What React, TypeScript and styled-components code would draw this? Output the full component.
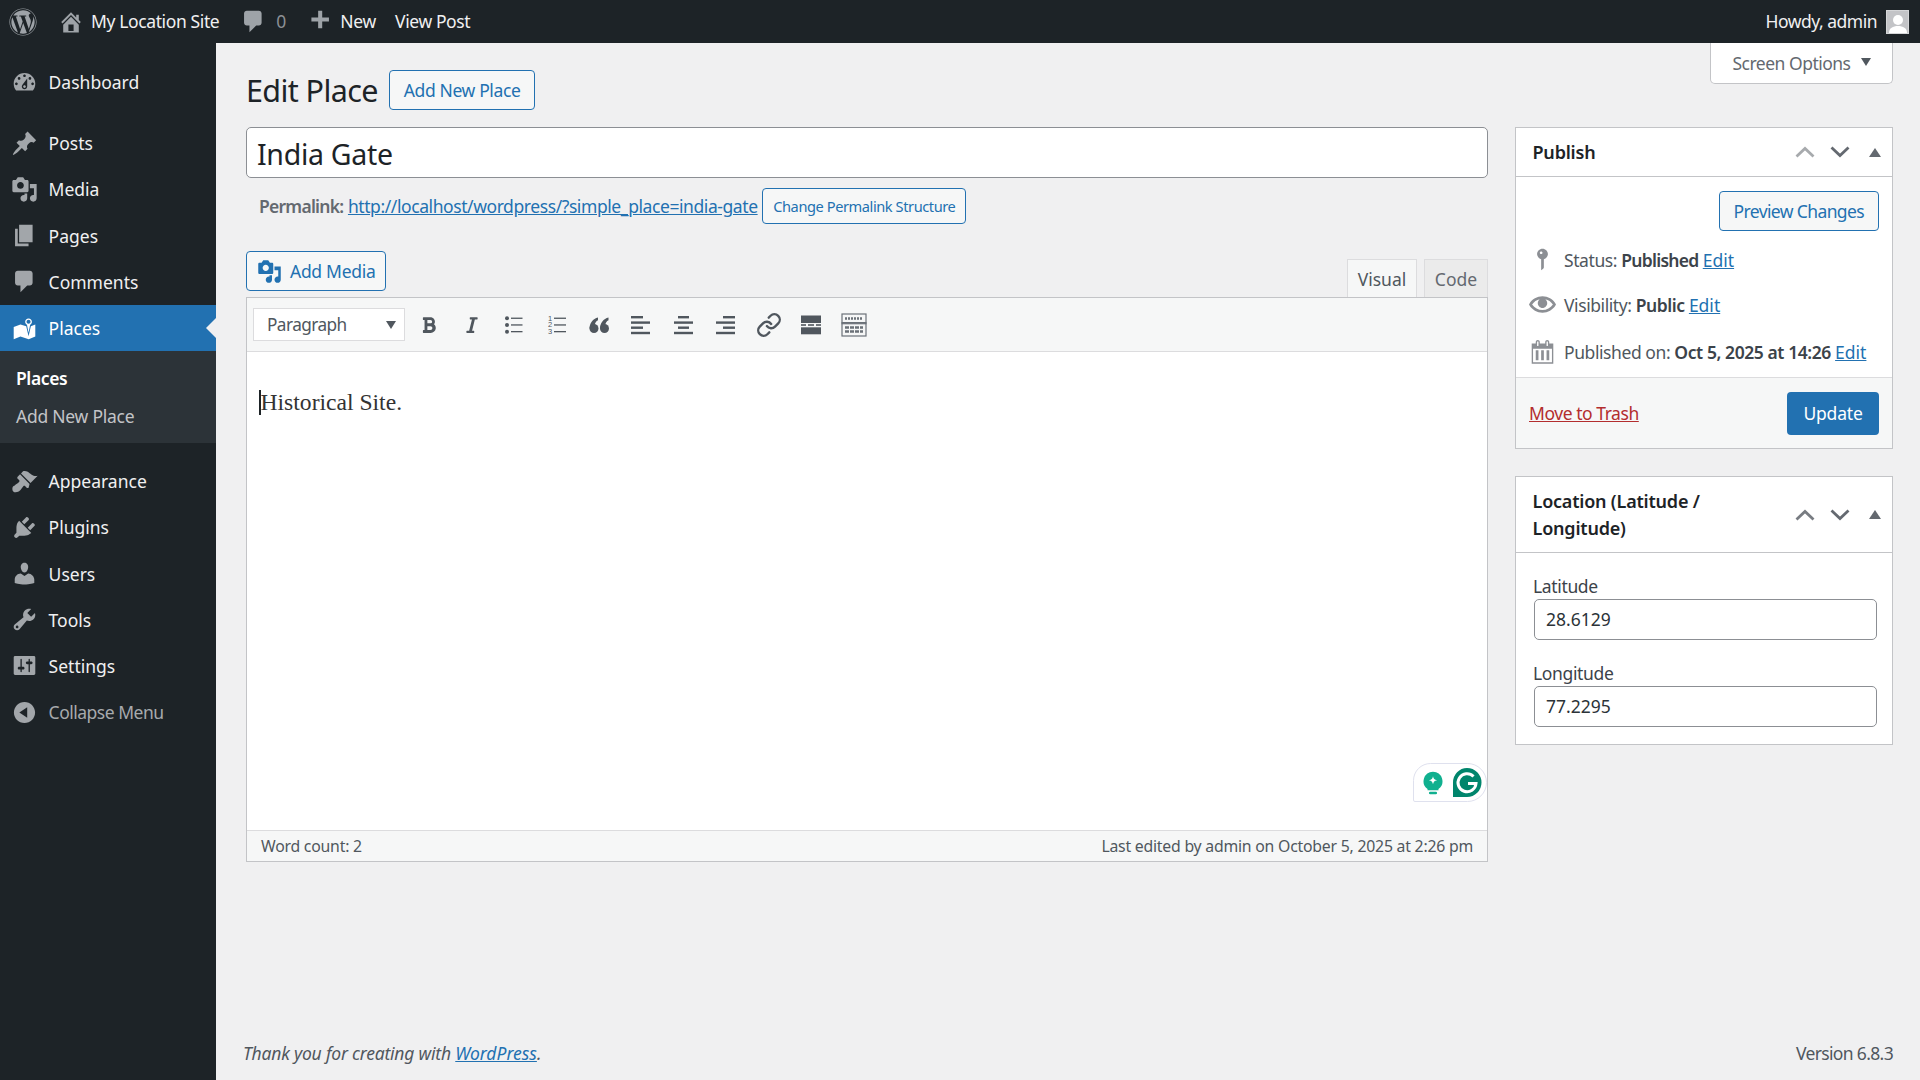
import React from 'react';
import styled, { createGlobalStyle } from 'styled-components';
import { FaWordpress, FaBold, FaItalic } from 'react-icons/fa';
import { Link as ChainIcon } from 'lucide-react';

const font = `"Noto Sans", "Open Sans", sans-serif`;

const Global = createGlobalStyle`
  html, body { margin: 0; padding: 0; height: 100%; background: #f0f0f1; }
  body { font-family: ${font}; font-size: 17.5px; color: #3c434a; overflow: hidden; }
  * { box-sizing: border-box; }
`;

const D: Record<string, string> = {
  dashboard: 'M3.76 16h12.48c1.1-1.37 1.76-3.11 1.76-5 0-4.42-3.58-8-8-8s-8 3.58-8 8c0 1.89.66 3.63 1.76 5zM10 4c.55 0 1 .45 1 1s-.45 1-1 1-1-.45-1-1 .45-1 1-1zM6 6c.55 0 1 .45 1 1s-.45 1-1 1-1-.45-1-1 .45-1 1-1zm8 0c.55 0 1 .45 1 1s-.45 1-1 1-1-.45-1-1 .45-1 1-1zm-5.37 5.55L12 7v6c0 1.1-.9 2-2 2s-2-.9-2-2c0-.57.24-1.08.63-1.45zM4 10c.55 0 1 .45 1 1s-.45 1-1 1-1-.45-1-1 .45-1 1-1zm12 0c.55 0 1 .45 1 1s-.45 1-1 1-1-.45-1-1 .45-1 1-1zm-5 3c0-.55-.45-1-1-1s-1 .45-1 1 .45 1 1 1 1-.45 1-1z',
  post: 'M10.44 3.02l1.82-1.82 6.36 6.35-1.83 1.82c-1.05-.68-2.48-.57-3.41.36l-.75.75c-.92.93-1.04 2.35-.35 3.41l-1.83 1.82-2.41-2.41-2.8 2.79c-.42.42-3.38 2.71-3.8 2.29s1.86-3.39 2.28-3.81l2.79-2.79L4.1 9.36l1.83-1.82c1.05.69 2.48.57 3.4-.36l.75-.75c.93-.92 1.05-2.35.36-3.41z',
  media: 'M13 11V4c0-.55-.45-1-1-1h-1.67L9 1H5L3.67 3H2c-.55 0-1 .45-1 1v7c0 .55.45 1 1 1h10c.55 0 1-.45 1-1zM7 4.5c1.38 0 2.5 1.12 2.5 2.5S8.38 9.5 7 9.5 4.5 8.38 4.5 7 5.62 4.5 7 4.5zM14 6h5v10.5c0 1.38-1.12 2.5-2.5 2.5S14 17.88 14 16.5s1.12-2.5 2.5-2.5c.17 0 .34.02.5.05V9h-3V6zm-4 8.05V13h2v3.5c0 1.38-1.12 2.5-2.5 2.5S7 17.88 7 16.5 8.12 14 9.5 14c.17 0 .34.02.5.05z',
  page: 'M6 15V2h10v13H6zm-1 1h8v2H3V5h2v11z',
  comment: 'M5 2h9c1.1 0 2 .9 2 2v7c0 1.1-.9 2-2 2h-2l-5 5v-5H5c-1.1 0-2-.9-2-2V4c0-1.1.9-2 2-2z',
  places: 'M13 13.14l1.17-5.94c.79-.43 1.33-1.25 1.33-2.2 0-1.38-1.12-2.5-2.5-2.5S10.5 3.62 10.5 5c0 .95.54 1.77 1.33 2.2zm0-9.64c.83 0 1.5.67 1.5 1.5s-.67 1.5-1.5 1.5-1.5-.67-1.5-1.5.67-1.5 1.5-1.5zm1.72 4.8L18 6.97v9L13.12 18 7 15.97l-5 2v-9l5-2 4.27 1.41 1.73 7.3z',
  appearance: 'M14.48 11.06L7.41 3.99l1.5-1.5c.5-.56 2.3-.47 3.51.32 1.21.8 1.43 1.28 2.91 2.1 1.18.64 2.45 1.26 4.45.85zm-.71.71L6.7 4.7 4.93 6.47c-.39.39-.39 1.02 0 1.41l1.06 1.06c.39.39.39 1.03 0 1.42-.6.6-1.43 1.11-2.21 1.69-.35.26-.7.53-1.01.84C1.43 13.23 1 14.12 1 15.5 1 17 2 18 3.5 18c1.38 0 2.27-.43 3.11-1.27.31-.31.58-.66.84-1.01.58-.78 1.09-1.61 1.69-2.21.39-.39 1.03-.39 1.42 0l1.06 1.06c.39.39 1.02.39 1.41 0z',
  plugins: 'M13.11 4.36L9.87 7.6 8 5.73l3.24-3.24c.35-.34 1.05-.2 1.56.32.52.51.66 1.21.31 1.55zm-8 1.77l.91-1.12 9.01 9.01-1.19.84c-.71.71-2.63 1.16-3.82 1.16H6.14L4.9 17.26c-.59.59-1.54.59-2.12 0-.59-.58-.59-1.53 0-2.12l1.24-1.24v-3.88c0-1.13.4-3.19 1.09-3.89zm7.26 3.97l3.24-3.24c.34-.35 1.04-.21 1.55.31.52.51.66 1.21.31 1.55l-3.24 3.25z',
  users: 'M10 9.25c-2.27 0-2.73-3.44-2.73-3.44C7 4.02 7.82 2 9.97 2c2.16 0 2.98 2.02 2.71 3.81 0 0-.41 3.44-2.68 3.44zm0 2.57L12.72 10c2.39 0 4.52 2.33 4.52 4.53v2.49s-3.65 1.13-7.24 1.13c-3.65 0-7.24-1.13-7.24-1.13v-2.49c0-2.25 1.94-4.48 4.47-4.48z',
  tools: 'M16.68 9.77c-1.34 1.34-3.3 1.67-4.95.99l-5.41 6.52c-.99.99-2.59.99-3.58 0s-.99-2.59 0-3.57l6.52-5.42c-.68-1.65-.35-3.61.99-4.95 1.28-1.28 3.12-1.62 4.72-1.06l-2.89 2.89 2.82 2.82 2.86-2.87c.53 1.58.18 3.39-1.08 4.65zM3.81 16.21c.4.39 1.04.39 1.43 0 .4-.4.4-1.04 0-1.43-.39-.4-1.03-.4-1.43 0-.39.39-.39 1.03 0 1.43z',
  settings: 'M18 16V4c0-.55-.45-1-1-1H3c-.55 0-1 .45-1 1v12c0 .55.45 1 1 1h14c.55 0 1-.45 1-1zM8 11h1c.55 0 1 .45 1 1s-.45 1-1 1H8v1.5c0 .28-.22.5-.5.5s-.5-.22-.5-.5V13H6c-.55 0-1-.45-1-1s.45-1 1-1h1V5.5c0-.28.22-.5.5-.5s.5.22.5.5V11zm5-2h-1c-.55 0-1-.45-1-1s.45-1 1-1h1V5.5c0-.28.22-.5.5-.5s.5.22.5.5V7h1c.55 0 1 .45 1 1s-.45 1-1 1h-1v5.5c0 .28-.22.5-.5.5s-.5-.22-.5-.5V9z',
  collapse: 'M10 2.16c4.33 0 7.84 3.51 7.84 7.84s-3.51 7.84-7.84 7.84S2.16 14.33 2.16 10 5.71 2.16 10 2.16zm2 11.72V6.12L6.18 9.97z',
  home: 'M16 8.5l1.53 1.53-1.06 1.06L10 4.62l-6.47 6.47-1.06-1.06L10 2.5l4 4v-2h2v4zm-6-2.46l6 5.99V18H4v-5.97zM12 17v-5H8v5h4z',
  plus: 'M17 7v3h-5v5H9v-5H4V7h5V2h3v5h5z',
  pin: 'M14 6c0 1.86-1.28 3.41-3 3.86V16c0 1-2 2-2 2V9.86c-1.72-.45-3-2-3-3.86 0-2.21 1.79-4 4-4s4 1.79 4 4zM8 5c0 .55.45 1 1 1s1-.45 1-1-.45-1-1-1-1 .45-1 1z',
  eye: 'M19.7 9.4C17.7 6 14 3.9 10 3.9S2.3 6 .3 9.4L0 10l.3.6c2 3.4 5.7 5.5 9.7 5.5s7.7-2.1 9.7-5.5l.3-.6-.3-.6zM10 14.1c-3.1 0-6-1.6-7.7-4.1C3.6 8 5.7 6.6 8 6.1c-.9.6-1.5 1.7-1.5 2.9 0 1.9 1.6 3.5 3.5 3.5s3.5-1.6 3.5-3.5c0-1.2-.6-2.3-1.5-2.9 2.3.5 4.4 1.9 5.7 3.9-1.7 2.5-4.6 4.1-7.7 4.1z',
  calendar: 'M15 4h3v15H2V4h3V3c0-.41.15-.76.44-1.06.29-.29.65-.44 1.06-.44s.77.15 1.06.44c.29.3.44.65.44 1.06v1h4V3c0-.41.15-.76.44-1.06.29-.29.65-.44 1.06-.44s.77.15 1.06.44c.29.3.44.65.44 1.06v1zM6 3v2.5c0 .14.05.26.15.36.09.09.21.14.35.14s.26-.05.35-.14c.1-.1.15-.22.15-.36V3c0-.14-.05-.26-.15-.35-.09-.1-.21-.15-.35-.15s-.26.05-.35.15c-.1.09-.15.21-.15.35zm7 0v2.5c0 .14.05.26.14.36.1.09.22.14.36.14s.26-.05.36-.14c.09-.1.14-.22.14-.36V3c0-.14-.05-.26-.14-.35-.1-.1-.22-.15-.36-.15s-.26.05-.36.15c-.09.09-.14.21-.14.35zm4 15V8H3v10h14zM5 9h2v7.5H5zM9 9h2v7.5H9zM13 9h2v7.5h-2z',
};

const Dash = ({ name, size = 27, color = 'currentColor' }: { name: string; size?: number; color?: string }) => (
  <svg width={size} height={size} viewBox="0 0 20 20" fill={color} fillRule="evenodd" aria-hidden="true">
    <path d={D[name]} />
  </svg>
);

const Page = styled.div`
  width: 1920px;
  height: 1080px;
  display: grid;
  grid-template-rows: 43px 1fr;
  grid-template-columns: 216px 1fr;
`;

const TopBar = styled.header`
  grid-column: 1 / 3;
  background: #1d2327;
  color: #f0f0f1;
  display: flex;
  align-items: center;
  padding: 0 11px 0 9px;
  font-size: 17.5px;
  line-height: 43px;
`;
const BarItem = styled.span<{ $w?: number; $gap?: number; $ls?: number }>`
  display: inline-flex;
  align-items: center;
  gap: ${(p) => p.$gap ?? 5}px;
  color: #f0f0f1;
  margin-right: ${(p) => p.$w ?? 0}px;
  letter-spacing: ${(p) => p.$ls ?? 0}px;
  white-space: nowrap;
`;
const BarIcon = styled.span`
  display: inline-flex;
  color: #9ea3a8;
`;
const BarCount = styled.span`
  color: #8c8f94;
  margin-left: 4px;
`;
const BarSpacer = styled.span`
  flex: 1;
`;
const Avatar = styled.span`
  width: 23px;
  height: 24px;
  margin-left: 9px;
  background: #c3c4c7;
  border: 1px solid #d5d6d8;
  display: inline-flex;
  align-items: flex-end;
  justify-content: center;
  overflow: hidden;
  color: #fff;
`;

const Sidebar = styled.nav`
  background: #1d2327;
  padding-top: 16px;
`;
const MenuItem = styled.div<{ $active?: boolean; $muted?: boolean; $gap?: number }>`
  height: 46.2px;
  margin-top: ${(p) => p.$gap ?? 0}px;
  display: flex;
  align-items: center;
  gap: 10.6px;
  padding-left: 11px;
  position: relative;
  color: ${(p) => (p.$active ? '#fff' : p.$muted ? '#a7aaad' : '#f0f0f1')};
  background: ${(p) => (p.$active ? '#2271b1' : 'transparent')};
  font-size: 17.5px;
  letter-spacing: ${(p) => (p.$muted ? -0.5 : 0)}px;
  ${(p) =>
    p.$active &&
    `&::after{content:'';position:absolute;right:0;top:50%;margin-top:-10px;border:10px solid transparent;border-right-color:#f0f0f1;border-left-width:0;}`}
`;
const MenuIcon = styled.span<{ $active?: boolean }>`
  width: 27px;
  height: 27px;
  display: inline-flex;
  color: ${(p) => (p.$active ? '#fff' : '#a2a6aa')};
`;
const SubMenu = styled.div`
  background: #2c3338;
  height: 92px;
  padding-top: 8px;
`;
const SubItem = styled.div<{ $on?: boolean }>`
  height: 38px;
  line-height: 38px;
  padding-left: 16px;
  font-size: 17.5px;
  font-weight: ${(p) => (p.$on ? 600 : 400)};
  letter-spacing: ${(p) => (p.$on ? -0.4 : -0.25)}px;
  color: ${(p) => (p.$on ? '#fff' : '#c3c4c7')};
`;

const Content = styled.main`
  padding: 0 27px;
  display: flex;
  flex-direction: column;
  position: relative;
`;
const ScreenRow = styled.div`
  height: 0;
  display: flex;
  justify-content: flex-end;
`;
const ScreenTab = styled.div`
  width: 183px;
  height: 41px;
  flex: none;
  background: #fff;
  border: 1px solid #c3c4c7;
  border-top: 0;
  border-radius: 0 0 5px 5px;
  display: flex;
  align-items: center;
  justify-content: center;
  gap: 10px;
  color: #646970;
  font-size: 17.5px;
  letter-spacing: -0.5px;
`;
const Arrow = styled.i`
  width: 0;
  height: 0;
  border-left: 5px solid transparent;
  border-right: 5px solid transparent;
  border-top: 8px solid #50575e;
  margin-bottom: 3px;
`;
const Wrap = styled.div`
  padding-left: 3px;
  flex: 1;
  display: flex;
  flex-direction: column;
`;
const Heading = styled.div`
  display: flex;
  align-items: center;
  gap: 11px;
  height: 39px;
  margin-top: 27px;
  margin-bottom: 18px;
`;
const Title = styled.h1`
  margin: 0;
  font-size: 30.5px;
  font-weight: 400;
  color: #1d2327;
  letter-spacing: -0.6px;
`;
const Button = styled.span<{ $h?: number; $small?: boolean; $ls?: number; $pad?: number; $gap?: number }>`
  display: inline-flex;
  align-items: center;
  justify-content: center;
  gap: ${(p) => p.$gap ?? 5}px;
  height: ${(p) => p.$h ?? 40}px;
  padding: 0 ${(p) => p.$pad ?? (p.$small ? 10 : 14)}px;
  border: 1px solid #2271b1;
  border-radius: 4px;
  background: #f6f7f7;
  color: #2271b1;
  font-size: ${(p) => (p.$small ? 14.6 : 17.5)}px;
  letter-spacing: ${(p) => p.$ls ?? -0.38}px;
  white-space: nowrap;
`;
const Columns = styled.div`
  display: grid;
  grid-template-columns: 1242px 378px;
  column-gap: 27px;
  align-items: start;
`;
const MainCol = styled.div`
  display: flex;
  flex-direction: column;
`;
const TitleInput = styled.input`
  width: 100%;
  height: 51px;
  padding: 2px 10px 0;
  border: 1px solid #8c8f94;
  border-radius: 5px;
  background: #fff;
  font-family: ${font};
  font-size: 28.5px;
  letter-spacing: -0.3px;
  color: #1d2327;
  outline: none;
`;
const Permalink = styled.div`
  display: flex;
  align-items: center;
  height: 36px;
  margin-top: 10px;
  padding-left: 13px;
  gap: 4.6px;
  font-size: 17.5px;
  color: #646970;
`;
const Strong = styled.b`
  font-weight: 600;
  letter-spacing: -0.75px;
`;
const Link = styled.a<{ $red?: boolean; $ls?: number }>`
  color: ${(p) => (p.$red ? '#b32d2e' : '#2271b1')};
  text-decoration: underline;
  letter-spacing: ${(p) => p.$ls ?? 0}px;
`;
const MediaRow = styled.div`
  display: flex;
  justify-content: space-between;
  align-items: flex-end;
  margin-top: 27px;
  height: 46px;
`;
const MediaBtnWrap = styled.div`
  align-self: flex-start;
`;
const Tabs = styled.div`
  display: flex;
  gap: 7px;
`;
const Tab = styled.span<{ $on?: boolean }>`
  height: 38px;
  width: ${(p) => (p.$on ? 70 : 64)}px;
  display: flex;
  align-items: center;
  justify-content: center;
  background: ${(p) => (p.$on ? '#f6f7f7' : '#ebebeb')};
  border: 1px solid #dcdcde;
  border-bottom: 0;
  color: ${(p) => (p.$on ? '#50575e' : '#646970')};
  font-size: 17.5px;
`;
const Editor = styled.div`
  border: 1px solid #c3c4c7;
  background: #fff;
  height: 565px;
  display: flex;
  flex-direction: column;
`;
const Toolbar = styled.div`
  height: 54px;
  flex: none;
  background: #f6f7f7;
  border-bottom: 1px solid #dcdcde;
  display: flex;
  align-items: center;
  padding-left: 6px;
`;
const Select = styled.div`
  width: 152px;
  height: 33px;
  background: #fff;
  border: 1px solid #dcdcde;
  display: flex;
  align-items: center;
  justify-content: space-between;
  padding: 0 8px 0 13px;
  color: #50575e;
  font-size: 17.2px;
  letter-spacing: -0.55px;
  margin-right: 3px;
`;
const SelArrow = styled.i`
  width: 0;
  height: 0;
  border-left: 5px solid transparent;
  border-right: 5px solid transparent;
  border-top: 8px solid #50575e;
`;
const Tool = styled.span`
  width: 42.45px;
  display: flex;
  justify-content: center;
  align-items: center;
  color: #50575e;
`;
const Body = styled.div`
  flex: 1;
  position: relative;
  padding: 37px 0 0 12px;
  display: flex;
  align-items: flex-start;
`;
const Caret = styled.i`
  display: block;
  width: 1.5px;
  height: 25px;
  background: #1d2327;
  margin-top: 1px;
`;
const Serif = styled.p`
  margin: 0;
  font-family: "Liberation Serif", serif;
  font-size: 23.6px;
  line-height: 27px;
  color: #333;
`;
const Gram = styled.div`
  position: absolute;
  right: 0;
  bottom: 28px;
  width: 74px;
  height: 39px;
  background: #fff;
  border: 1px solid #dfe1ee;
  border-radius: 18px 20px 20px 2px;
  display: flex;
  align-items: center;
  justify-content: flex-end;
  gap: 9px;
  padding-right: 4px;
`;
const Status = styled.div`
  height: 31px;
  flex: none;
  background: #f6f7f7;
  border-top: 1px solid #dcdcde;
  display: flex;
  justify-content: space-between;
  align-items: center;
  padding: 0 14px 0 14px;
  font-size: 15.8px;
  letter-spacing: -0.22px;
  color: #50575e;
`;
const Side = styled.aside`
  display: flex;
  flex-direction: column;
  gap: 27px;
`;
const Box = styled.section`
  background: #fff;
  border: 1px solid #c3c4c7;
`;
const BoxHead = styled.div<{ $h: number }>`
  height: ${(p) => p.$h}px;
  border-bottom: 1px solid #c3c4c7;
  display: flex;
  align-items: center;
  justify-content: space-between;
  padding: 0 0 0 16.5px;
`;
const BoxTitle = styled.h2`
  margin: 0;
  font-size: 18px;
  font-weight: 600;
  line-height: 27px;
  letter-spacing: -0.2px;
  color: #1d2327;
  width: 210px;
`;
const Handles = styled.div`
  display: flex;
  align-items: center;
`;
const Handle = styled.span`
  width: 35px;
  display: flex;
  justify-content: center;
`;
const PreviewRow = styled.div`
  display: flex;
  justify-content: flex-end;
  padding: 14px 13px 0 0;
`;
const Meta = styled.div<{ $mt: number }>`
  display: flex;
  align-items: center;
  gap: 8px;
  height: 27px;
  margin-top: ${(p) => p.$mt}px;
  padding-left: 13px;
  color: #50575e;
  font-size: 17.5px;
  white-space: nowrap;
`;
const MetaText = styled.span`
  letter-spacing: -0.42px;
`;
const MetaIcon = styled.span`
  width: 27px;
  height: 27px;
  display: inline-flex;
  color: #8c8f94;
`;
const Bold = styled.b<{ $ls?: number }>`
  font-weight: 600;
  color: #3c434a;
  ${(p) => (p.$ls !== undefined ? `letter-spacing: ${p.$ls}px;` : '')}
`;
const Actions = styled.div`
  margin-top: 12px;
  height: 71px;
  background: #f6f7f7;
  border-top: 1px solid #dcdcde;
  display: flex;
  align-items: center;
  justify-content: space-between;
  padding: 0 13px;
`;
const Primary = styled.span`
  width: 92px;
  height: 43px;
  background: #2271b1;
  color: #fff;
  border-radius: 4px;
  display: flex;
  align-items: center;
  justify-content: center;
  font-size: 17.5px;
  letter-spacing: -0.2px;
`;
const Fields = styled.div`
  padding: 19px 13px 17px 17px;
`;
const Field = styled.label<{ $mt?: number }>`
  display: block;
  margin-top: ${(p) => p.$mt ?? 0}px;
  padding-top: 1px;
  font-size: 17.5px;
  line-height: 26px;
  letter-spacing: -0.35px;
  color: #3c434a;
`;
const FieldInput = styled.input`
  display: block;
  width: 343px;
  height: 41px;
  margin-left: 1px;
  padding: 0 11px 2px;
  border: 1px solid #8c8f94;
  border-radius: 5px;
  background: #fff;
  font-family: ${font};
  font-size: 17.5px;
  color: #2c3338;
  outline: none;
`;
const Footer = styled.footer`
  margin-top: auto;
  margin-left: -3px;
  height: 54px;
  display: flex;
  align-items: center;
  justify-content: space-between;
  color: #50575e;
  font-size: 17.5px;
`;
const Italic = styled.span`
  font-style: italic;
  letter-spacing: -0.2px;
`;
const Version = styled.span`
  letter-spacing: -0.65px;
`;

const Up = ({ c }: { c: string }) => (
  <svg width="20" height="12" viewBox="0 0 20 12" fill="none" stroke={c} strokeWidth="2.8"><path d="M1.500 10.500 10 2.500l8.500 8" /></svg>
);
const Down = ({ c }: { c: string }) => (
  <svg width="20" height="12" viewBox="0 0 20 12" fill="none" stroke={c} strokeWidth="2.8"><path d="M1.500 1.500 10 9.500l8.500-8" /></svg>
);
const Tri = () => (
  <svg width="12" height="9" viewBox="0 0 12 9" fill="#646970"><path d="M6 0l6 9H0z" /></svg>
);

const HandleSet = ({ dim }: { dim?: boolean }) => (
  <Handles>
    <Handle><Up c={dim ? '#a7aaad' : '#787c82'} /></Handle>
    <Handle><Down c="#646970" /></Handle>
    <Handle><Tri /></Handle>
  </Handles>
);

const menu: [string, string, number?][] = [
  ['dashboard', 'Dashboard'],
  ['post', 'Posts', 15],
  ['media', 'Media'],
  ['page', 'Pages'],
  ['comment', 'Comments'],
];
const menu2: [string, string, number?][] = [
  ['appearance', 'Appearance', 15],
  ['plugins', 'Plugins'],
  ['users', 'Users'],
  ['tools', 'Tools'],
  ['settings', 'Settings'],
];

const ico = { fill: '#50575e' };
const digit = { fontSize: 7.5, fontFamily: 'Liberation Sans, sans-serif' };
const tools = [
  <FaBold size={18} key="b" />,
  <FaItalic size={18} key="i" />,
  <svg key="ul" width="24" height="24" viewBox="0 0 24 24" {...ico}><circle cx="5" cy="5.300" r="2" /><circle cx="5" cy="12" r="2" /><circle cx="5" cy="18.700" r="2" /><rect x="9" y="4.600" width="11.500" height="1.300" /><rect x="9" y="11.300" width="11.500" height="1.300" /><rect x="9" y="18" width="11.500" height="1.300" /></svg>,
  <svg key="ol" width="24" height="24" viewBox="0 0 24 24" {...ico}><text x="3" y="7.600" {...digit}>1</text><text x="3" y="14.300" {...digit}>2</text><text x="3" y="21" {...digit}>3</text><rect x="9" y="4.600" width="12" height="1.300" /><rect x="9" y="11.300" width="12" height="1.300" /><rect x="9" y="18" width="12" height="1.300" /></svg>,
  <svg key="q" width="24" height="24" viewBox="0 0 24 24" {...ico}><circle cx="7" cy="15.500" r="4.500" /><circle cx="17.500" cy="15.500" r="4.500" /><path d="M2.500 15.500C2.500 10.500 6 5.500 11 4.500v2.800C9 8.300 8 10 8 11.500z" /><path d="M13 15.500c0-5 3.500-10 8.500-11v2.800c-2 1-3 2.700-3 4.200z" /></svg>,
  <svg key="al" width="24" height="24" viewBox="0 0 24 24" {...ico}><rect x="2" y="3" width="12" height="2.400" /><rect x="2" y="8.400" width="19" height="2.400" /><rect x="2" y="13.500" width="12" height="2.400" /><rect x="2" y="18.800" width="19" height="2.400" /></svg>,
  <svg key="ac" width="24" height="24" viewBox="0 0 24 24" {...ico}><rect x="6" y="3" width="11" height="2.400" /><rect x="2" y="8.400" width="19" height="2.400" /><rect x="6" y="13.500" width="11" height="2.400" /><rect x="2" y="18.800" width="19" height="2.400" /></svg>,
  <svg key="ar" width="24" height="24" viewBox="0 0 24 24" {...ico}><rect x="9" y="3" width="12" height="2.400" /><rect x="2" y="8.400" width="19" height="2.400" /><rect x="9" y="13.500" width="12" height="2.400" /><rect x="2" y="18.800" width="19" height="2.400" /></svg>,
  <ChainIcon size={26} strokeWidth={2.2} key="l" />,
  <svg key="m" width="24" height="24" viewBox="0 0 24 24" {...ico}><rect x="2" y="2.500" width="20" height="7.500" /><rect x="2" y="11.200" width="5" height="1.600" /><rect x="9" y="11.200" width="6" height="1.600" /><rect x="17" y="11.200" width="5" height="1.600" /><rect x="2" y="14.300" width="20" height="7" /></svg>,
  <svg key="k" width="26" height="24" viewBox="0 0 26 24" fill="none" stroke="#6b7178"><rect x="1" y="1" width="24" height="22" strokeWidth="1.200" /><rect x="1" y="9.500" width="24" height="1.300" fill="#6b7178" /><path d="M4 5.500h18" strokeWidth="2.600" strokeDasharray="2 1" /><path d="M4 14.500h18M4 18.500h18" strokeWidth="2.600" strokeDasharray="4 1" /></svg>,
];

export default function App() {
  return (
    <Page>
      <Global />
      <TopBar>
        <BarItem $w={21}><BarIcon><FaWordpress size={28} /></BarIcon></BarItem>
        <BarItem $w={21} $gap={7} $ls={-0.38}><BarIcon><Dash name="home" size={26} /></BarIcon>My Location Site</BarItem>
        <BarItem $w={20}><BarIcon><Dash name="comment" size={27} /></BarIcon><BarCount>0</BarCount></BarItem>
        <BarItem $w={19} $gap={7} $ls={-0.3}><BarIcon><Dash name="plus" size={27} /></BarIcon>New</BarItem>
        <BarItem $ls={-0.4}>View Post</BarItem>
        <BarSpacer />
        <BarItem $ls={-0.5}>Howdy, admin</BarItem>
        <Avatar>
          <svg width="18" height="20" viewBox="0 0 18 20" fill="#fff"><circle cx="9" cy="7" r="5" /><path d="M0 20c0-5 4-7 9-7s9 2 9 7z" /></svg>
        </Avatar>
      </TopBar>
      <Sidebar>
        {menu.map(([n, t, g]) => (
          <MenuItem key={t} $gap={g}><MenuIcon><Dash name={n} /></MenuIcon>{t}</MenuItem>
        ))}
        <MenuItem $active><MenuIcon $active><Dash name="places" /></MenuIcon>Places</MenuItem>
        <SubMenu>
          <SubItem $on>Places</SubItem>
          <SubItem>Add New Place</SubItem>
        </SubMenu>
        {menu2.map(([n, t, g]) => (
          <MenuItem key={t} $gap={g}><MenuIcon><Dash name={n} /></MenuIcon>{t}</MenuItem>
        ))}
        <MenuItem $muted><MenuIcon><Dash name="collapse" /></MenuIcon>Collapse Menu</MenuItem>
      </Sidebar>
      <Content>
        <ScreenRow><ScreenTab>Screen Options<Arrow /></ScreenTab></ScreenRow>
        <Wrap>
          <Heading><Title>Edit Place</Title><Button>Add New Place</Button></Heading>
          <Columns>
            <MainCol>
              <TitleInput readOnly value="India Gate" />
              <Permalink>
                <Strong>Permalink:</Strong>
                <Link $ls={-0.42}>http://localhost/wordpress/?simple_place=india-gate</Link>
                <Button $h={36} $small $ls={-0.42}>Change Permalink Structure</Button>
              </Permalink>
              <MediaRow>
                <MediaBtnWrap>
                  <Button $pad={10} $gap={8} $ls={-0.3}><Dash name="media" size={25} />Add Media</Button>
                </MediaBtnWrap>
                <Tabs><Tab $on>Visual</Tab><Tab>Code</Tab></Tabs>
              </MediaRow>
              <Editor>
                <Toolbar>
                  <Select>Paragraph<SelArrow /></Select>
                  {tools.map((t, i) => <Tool key={i}>{t}</Tool>)}
                </Toolbar>
                <Body>
                  <Caret />
                  <Serif>Historical Site.</Serif>
                  <Gram>
                    <svg width="20" height="24" viewBox="0 0 22 26"><path d="M11 0.500a10.500 10.500 0 0 0-6 19V21h12v-1.500a10.500 10.500 0 0 0-6-19z" fill="#10b08f" /><path d="M11 5.500c.6 3 1.500 3.900 4.500 4.500-3 .6-3.900 1.500-4.500 4.500-.6-3-1.500-3.900-4.500-4.500 3-.6 3.900-1.500 4.500-4.500z" fill="#fff" /><rect x="6.500" y="22.500" width="9" height="3" rx="1.500" fill="#10b08f" /></svg>
                    <svg width="30" height="31" viewBox="0 0 30 31"><path d="M15 1a14.500 14.500 0 1 1 0 29H1V15.500A14 14.500 0 0 1 15 1z" fill="#00856c" /><path d="M21.500 9.500a9 9 0 1 0 2.500 7h-8" fill="none" stroke="#fff" strokeWidth="3" /></svg>
                  </Gram>
                </Body>
                <Status>
                  <span>Word count: 2</span>
                  <span>Last edited by admin on October 5, 2025 at 2:26 pm</span>
                </Status>
              </Editor>
            </MainCol>
            <Side>
              <Box>
                <BoxHead $h={49}><BoxTitle>Publish</BoxTitle><HandleSet dim /></BoxHead>
                <PreviewRow><Button $ls={-0.62}>Preview Changes</Button></PreviewRow>
                <Meta $mt={15}><MetaIcon><Dash name="pin" /></MetaIcon><MetaText>Status: <Bold $ls={-0.7}>Published</Bold> <Link>Edit</Link></MetaText></Meta>
                <Meta $mt={18}><MetaIcon><Dash name="eye" /></MetaIcon><MetaText>Visibility: <Bold>Public</Bold> <Link>Edit</Link></MetaText></Meta>
                <Meta $mt={20}><MetaIcon><Dash name="calendar" /></MetaIcon><MetaText>Published on: <Bold>Oct 5, 2025 at 14:26</Bold> <Link>Edit</Link></MetaText></Meta>
                <Actions><Link $red $ls={-0.45}>Move to Trash</Link><Primary>Update</Primary></Actions>
              </Box>
              <Box>
                <BoxHead $h={76}><BoxTitle>Location (Latitude / Longitude)</BoxTitle><HandleSet /></BoxHead>
                <Fields>
                  <Field>Latitude<FieldInput readOnly value="28.6129" /></Field>
                  <Field $mt={19}>Longitude<FieldInput readOnly value="77.2295" /></Field>
                </Fields>
              </Box>
            </Side>
          </Columns>
          <Footer>
            <Italic>Thank you for creating with <Link>WordPress</Link>.</Italic>
            <Version>Version 6.8.3</Version>
          </Footer>
        </Wrap>
      </Content>
    </Page>
  );
}
